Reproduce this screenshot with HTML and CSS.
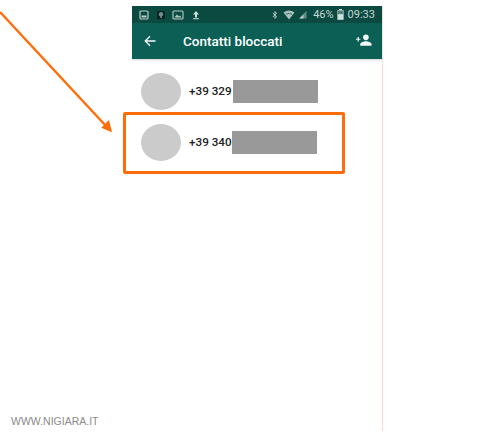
FILE: index.html
```html
<!DOCTYPE html>
<html lang="it">
<head>
    <meta charset="UTF-8">
    <meta name="viewport" content="width=device-width, initial-scale=1.0">
    <title>Contatti bloccati</title>
    <link rel="stylesheet" href="styles.css">
</head>
<body>
    <div class="phone">
        <div class="status-bar">
            <div class="status-left">
                <svg class="st-icon screen" viewBox="0 0 10 10"><rect x="1" y="1" width="8" height="8" rx="1" fill="none" stroke="#b9cfca" stroke-width="1.2"/><rect x="2.5" y="5.5" width="5" height="2" fill="#b9cfca"/></svg>
                <svg class="st-icon bulb" viewBox="0 0 10 10"><rect x="1" y="1" width="8" height="8" rx="1" fill="#06231f"/><circle cx="5" cy="4.2" r="2.2" fill="#6f8f8a"/><rect x="4" y="6.2" width="2" height="1.6" fill="#6f8f8a"/></svg>
                <svg class="st-icon photo" viewBox="0 0 12 10"><rect x="1" y="1" width="10" height="8" rx="1" fill="none" stroke="#b9cfca" stroke-width="1.1"/><path d="M2.5 7.500 5 4.500l2 2 1.200-1 1.300 2z" fill="#b9cfca"/></svg>
                <svg class="st-icon upload" viewBox="0 0 10 10"><path d="M5 1 8 4.600H6V7.400H4V4.600H2zM2 8.200h6v1H2z" fill="#cfe0dc"/></svg>
            </div>
            <div class="status-right">
                <svg class="st-icon bt" viewBox="0 0 8 12"><path d="M1 3.200 6 8.400 4 10.600V1.400L6 3.600 1 8.800" fill="none" stroke="#cfe0dc" stroke-width="1.1"/></svg>
                <svg class="st-icon wifi" viewBox="0 0 12 10"><path d="M.5 2.600Q6-1.400 11.500 2.600L6 9.600z" fill="#a9c2bd"/><path d="M3 4.200Q6 2.400 9 4.200" fill="none" stroke="#0c4f46" stroke-width=".7"/></svg>
                <svg class="st-icon signal" viewBox="0 0 10 10"><path d="M9.500.8v8.700H.8z" fill="#5c8a83"/><path d="M6 5v4.500H1.800z" fill="#b9cfca"/></svg>
                <span class="st-text percent">46%</span>
                <svg class="st-icon battery" viewBox="0 0 7 11"><rect x="2" y="0" width="3" height="1.200" fill="#cfe0dc"/><rect x=".4" y="1.200" width="6.200" height="9.600" fill="#cfe0dc"/><rect x=".9" y="1.700" width="5.200" height="3.400" fill="#55807a"/></svg>
                <span class="st-text clock">09:33</span>
            </div>
        </div>
        <div class="toolbar">
            <svg class="back" viewBox="0 0 12 12"><path d="M11.500 6H1.500M6 1.200 1.200 6 6 10.800" fill="none" stroke="#f2f7f6" stroke-width="1.300"/></svg>
            <span class="title">Contatti bloccati</span>
            <svg class="add-contact" viewBox="0 0 17 12"><circle cx="10.500" cy="3.200" r="3" fill="#f2f7f6"/><path d="M4.500 12V10.400C4.500 8.200 8.500 7.200 10.500 7.200S16.500 8.200 16.500 10.400V12z" fill="#f2f7f6"/><path d="M0 5.200h4.600M2.300 2.900v4.600" stroke="#f2f7f6" stroke-width="1.300"/></svg>
        </div>
        <div class="contact-list">
            <div class="contact">
                <div class="avatar"></div>
                <span class="number">+39 329</span>
                <div class="redacted"></div>
            </div>
            <div class="contact second">
                <div class="avatar"></div>
                <span class="number">+39 340</span>
                <div class="redacted"></div>
            </div>
        </div>
    </div>

    <div class="highlight"></div>
    <svg class="arrow" viewBox="0 0 130 140" width="130" height="140">
        <path d="M0 12 106 126" stroke="#ff6d0a" stroke-width="2.400" fill="none"/>
        <path d="M111 131 102.500 127.500 108.500 121.500z" fill="#ff6d0a" stroke="#ff6d0a" stroke-width="1.500"/>
    </svg>

    <div class="watermark">WWW.NIGIARA.IT</div>
</body>
</html>
```

FILE: styles.css
```css
html, body { margin: 0; height: 440px; overflow: hidden; background: #fff; }
body { font-family: Roboto, "Liberation Sans", Arial, sans-serif; padding-top: 6px; box-sizing: border-box; }

.phone { width: 250px; height: 425px; margin-left: 132px; border-right: 1px solid #f0e0d4; }

.status-bar { height: 17px; background: #0b4a41; display: flex; justify-content: space-between; align-items: center; padding: 0 7px 0 7px; color: #c4d6d2; }
.status-left, .status-right { display: flex; align-items: center; }
.st-icon { width: 10px; height: 10px; display: block; }
.st-icon.bulb { margin-left: 7px; }
.st-icon.photo { width: 12px; margin-left: 6px; }
.st-icon.upload { margin-left: 7px; }
.st-icon.bt { width: 6px; height: 10px; }
.st-icon.wifi { width: 12px; margin-left: 5px; }
.st-icon.signal { width: 9px; height: 9px; margin-left: 3px; }
.st-icon.battery { width: 7px; height: 11px; margin-left: 3px; }
.st-text { font-size: 11px; }
.percent { margin-left: 6px; }
.clock { margin-left: 4px; }

.toolbar { height: 36px; background: #0b5f55; display: flex; align-items: center; color: #fff; border-bottom: 1px solid #e3e3e3; box-shadow: 0 1px 1px #eeeeee; }
.back { width: 12px; height: 12px; margin-left: 12px; }
.title { font-size: 13.5px; font-weight: 500; margin-left: 27px; flex: 1; }
.add-contact { width: 16px; height: 12px; margin-right: 10px; margin-top: -2px; }

.contact-list { padding-top: 12px; }
.contact { display: flex; align-items: center; padding-left: 9px; height: 38px; }
.contact.second { margin-top: 13px; }
.avatar { width: 40px; height: 37px; border-radius: 50%; background: #cbcbcb; flex-shrink: 0; }
.number { font-size: 11.7px; font-weight: 500; color: #222; margin-left: 8px; width: 44px; white-space: nowrap; }
.redacted { width: 85px; height: 23px; background: #999; }
.second .redacted { margin-left: -1px; }

/* annotazioni sopra lo screenshot */
.highlight { position: absolute; left: 123px; top: 112px; width: 216px; height: 56px; border: 3px solid #ff6d0a; border-radius: 2px; }
.arrow { position: absolute; left: 0; top: 0; }

.watermark { position: absolute; left: 11px; top: 415px; font-family: "Liberation Sans", Arial, sans-serif; font-size: 10.5px; color: #8a8a8a; }
```
